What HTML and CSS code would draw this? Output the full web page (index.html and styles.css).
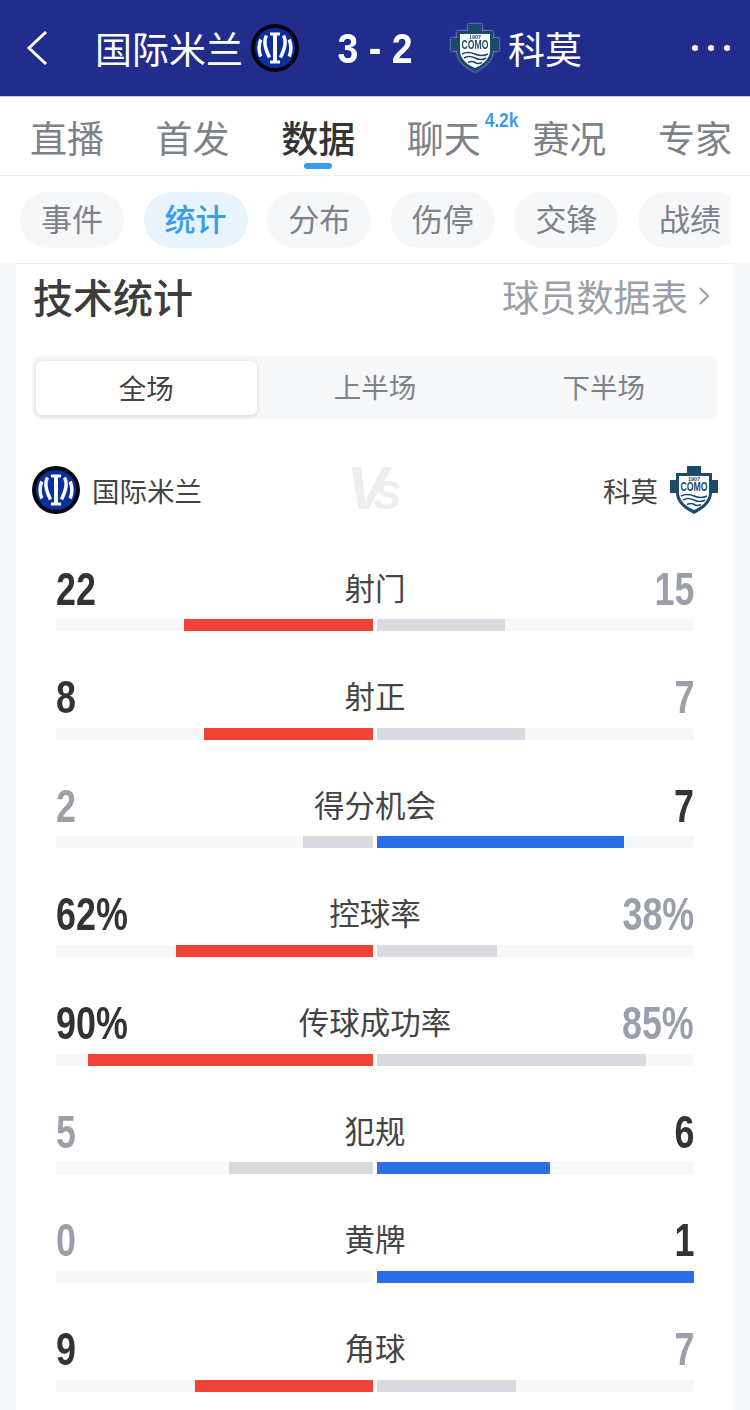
FILE: index.html
```html
<!DOCTYPE html>
<html lang="zh-CN">
<head>
    <meta charset="UTF-8">
    <meta name="viewport" content="width=device-width, initial-scale=1.0">
    <title>技术统计</title>
    <link rel="stylesheet" href="styles.css">
</head>
<body>

<svg class="defs" width="0" height="0" aria-hidden="true">
    <symbol id="inter" viewBox="0 0 48 48">
        <circle cx="24" cy="24" r="24" fill="#05060f"/>
        <circle cx="24" cy="24" r="20" fill="#0b2f9f"/>
        <g fill="none" stroke="#fff" stroke-width="3.400">
            <path d="M9.800 15.500q-3.500 8.500 0 17"/>
            <path d="M38.200 15.500q3.500 8.500 0 17"/>
            <path d="M15.500 11.500c-3 5-2 12 3 22"/>
            <path d="M32.500 11.500c3 5 2 12-3 22"/>
            <path d="M24 10v28" stroke-width="4"/>
        </g>
        <path d="M19 8.500h10v3h-10zM19 36.500h10v3h-10z" fill="#fff"/>
    </symbol>
    <symbol id="como-shield" viewBox="0 0 48 48">
        <path d="M17 0h14v7h11v7h6v13h-6c0 10-10 17-18 21-8-4-18-11-18-21H0V14h6V7h11z" fill="#1c4a6c"/>
        <path d="M9 10h30v17c0 8-8 14-15 17-7-3-15-9-15-17z" fill="#fff"/>
        <g fill="none" stroke="#1c4a6c" stroke-width="1.600">
            <path d="M11 30q6-3 13 0t13 0"/>
            <path d="M13 34q5-3 11 0t11 0"/>
            <path d="M17 38.500q4-2 7 0t7 0"/>
        </g>
    </symbol>
</svg>

<header class="match-bar">
    <svg class="back" viewBox="0 0 24 40" width="24" height="40"><path d="M21 4L4 20l17 16" fill="none" stroke="#fff" stroke-width="3"/></svg>
    <span class="team-name home">国际米兰</span>
    <svg class="crest-top inter-top"><use href="#inter"/></svg>
    <span class="score">3 - 2</span>
    <svg class="crest-top como-top" viewBox="0 0 48 48">
        <use href="#como-shield" width="48" height="48"/>
        <text class="como-year" x="24" y="14.500" text-anchor="middle" textLength="12" lengthAdjust="spacingAndGlyphs">1907</text>
        <text class="como-name" x="24" y="25" text-anchor="middle" textLength="27" lengthAdjust="spacingAndGlyphs">COMO</text>
    </svg>
    <span class="team-name">科莫</span>
    <span class="dots"><i></i><i></i><i></i></span>
</header>

<nav class="tabs">
    <a>直播</a>
    <a>首发</a>
    <a class="active">数据</a>
    <a class="has-badge">聊天<sup>4.2k</sup></a>
    <a>赛况</a>
    <a>专家</a>
</nav>

<div class="pills">
    <a>事件</a>
    <a class="active">统计</a>
    <a>分布</a>
    <a>伤停</a>
    <a>交锋</a>
    <a>战绩</a>
</div>

<main class="card">
    <div class="card-head">
        <h2>技术统计</h2>
        <a class="more">球员数据表<svg viewBox="0 0 12 20" width="12" height="20"><path d="M2 2l8 8-8 8" fill="none" stroke="#9a9fa9" stroke-width="2"/></svg></a>
    </div>

    <div class="periods">
        <a class="active">全场</a>
        <a>上半场</a>
        <a>下半场</a>
    </div>

    <div class="teams">
        <span class="team"><svg class="crest"><use href="#inter"/></svg>国际米兰</span>
        <span class="vs">V<small>S</small></span>
        <span class="team away">科莫<svg class="crest" viewBox="0 0 48 48">
            <use href="#como-shield" width="48" height="48"/>
            <text class="como-year" x="24" y="14.500" text-anchor="middle" textLength="12" lengthAdjust="spacingAndGlyphs">1907</text>
            <text class="como-name" x="24" y="25" text-anchor="middle" textLength="27" lengthAdjust="spacingAndGlyphs">COMO</text>
        </svg></span>
    </div>

    <section class="stat">
        <div class="stat-top"><b>22</b><span>射门</span><b class="dim">15</b></div>
        <div class="bars">
            <div class="track left"><i class="red" style="width:59.5%"></i></div>
            <div class="track"><i class="grey" style="width:40.5%"></i></div>
        </div>
    </section>
    <section class="stat">
        <div class="stat-top"><b>8</b><span>射正</span><b class="dim">7</b></div>
        <div class="bars">
            <div class="track left"><i class="red" style="width:53.3%"></i></div>
            <div class="track"><i class="grey" style="width:46.7%"></i></div>
        </div>
    </section>
    <section class="stat">
        <div class="stat-top"><b class="dim">2</b><span>得分机会</span><b>7</b></div>
        <div class="bars">
            <div class="track left"><i class="grey" style="width:22.2%"></i></div>
            <div class="track"><i class="blue" style="width:77.8%"></i></div>
        </div>
    </section>
    <section class="stat">
        <div class="stat-top"><b>62%</b><span>控球率</span><b class="dim">38%</b></div>
        <div class="bars">
            <div class="track left"><i class="red" style="width:62%"></i></div>
            <div class="track"><i class="grey" style="width:38%"></i></div>
        </div>
    </section>
    <section class="stat">
        <div class="stat-top"><b>90%</b><span>传球成功率</span><b class="dim">85%</b></div>
        <div class="bars">
            <div class="track left"><i class="red" style="width:90%"></i></div>
            <div class="track"><i class="grey" style="width:85%"></i></div>
        </div>
    </section>
    <section class="stat">
        <div class="stat-top"><b class="dim">5</b><span>犯规</span><b>6</b></div>
        <div class="bars">
            <div class="track left"><i class="grey" style="width:45.5%"></i></div>
            <div class="track"><i class="blue" style="width:54.5%"></i></div>
        </div>
    </section>
    <section class="stat">
        <div class="stat-top"><b class="dim">0</b><span>黄牌</span><b>1</b></div>
        <div class="bars">
            <div class="track left"><i class="grey" style="width:0"></i></div>
            <div class="track"><i class="blue" style="width:100%"></i></div>
        </div>
    </section>
    <section class="stat">
        <div class="stat-top"><b>9</b><span>角球</span><b class="dim">7</b></div>
        <div class="bars">
            <div class="track left"><i class="red" style="width:56.25%"></i></div>
            <div class="track"><i class="grey" style="width:43.75%"></i></div>
        </div>
    </section>
</main>

</body>
</html>
```

FILE: styles.css
```css
html, body {
    margin: 0;
    height: 1410px;
    overflow: hidden;
}
body {
    font-family: "Noto Sans CJK SC", "Noto Sans", sans-serif;
    background-color: #f7f8fa;
    color: #333;
}
a {
    display: block;
}
.defs {
    display: block;
    height: 0;
}
.como-year {
    font-family: "Liberation Sans", sans-serif;
    font-size: 5px;
    font-weight: bold;
    fill: #1c4a6c;
}
.como-name {
    font-family: "Liberation Sans", sans-serif;
    font-size: 12px;
    font-weight: bold;
    fill: #1c4a6c;
}

.match-bar {
    display: flex;
    align-items: center;
    height: 96px;
    background-color: #212d8d;
    color: #fff;
    border-bottom: 1px solid #c9cbdc;
}
.back {
    margin-left: 25px;
}
.team-name {
    font-size: 37px;
    line-height: 94px;
}
.team-name.home {
    margin-left: 46px;
}
.crest-top {
    width: 48px;
    height: 48px;
}
.inter-top {
    margin-left: 8px;
}
.score {
    width: 86px;
    margin-left: 33px;
    font-family: "Liberation Sans", sans-serif;
    font-size: 43px;
    font-weight: bold;
    text-align: center;
    white-space: pre;
    transform: scaleX(0.87);
}
.como-top {
    margin-left: 33px;
    margin-right: 9px;
    filter: drop-shadow(0 0 1px #cfd6e6);
}
.dots {
    display: flex;
    gap: 10px;
    margin-left: auto;
    margin-right: 20px;
}
.dots i {
    width: 6px;
    height: 6px;
    border-radius: 50%;
    background-color: #fff;
}

.tabs {
    display: flex;
    justify-content: space-between;
    height: 78px;
    padding: 0 18px 0 30px;
    background-color: #fff;
    border-bottom: 1px solid #eff0f2;
}
.tabs a {
    position: relative;
    width: 74px;
    font-size: 37px;
    line-height: 80px;
    color: #7d8289;
    white-space: nowrap;
}
.tabs a.active {
    color: #333;
    font-weight: 500;
}
.tabs a.active::after {
    content: "";
    position: absolute;
    left: 23px;
    bottom: 6px;
    width: 28px;
    height: 6px;
    border-radius: 3px;
    background-color: #3a9cec;
}
.tabs sup {
    position: absolute;
    left: 78px;
    top: 11px;
    font-family: "Liberation Sans", sans-serif;
    font-size: 20px;
    font-weight: bold;
    line-height: 24px;
    color: #3a9cec;
    transform: scaleX(0.86);
    transform-origin: left;
}

.pills {
    display: flex;
    gap: 19.600px;
    height: 56px;
    padding: 16px 0 15px 20px;
    width: 710px;
    overflow: hidden;
    background-color: #fff;
    border-right: 20px solid #fff;
}
.pills a {
    flex: 0 0 104px;
    height: 56px;
    border-radius: 28px;
    background-color: #f6f7f9;
    font-size: 31px;
    line-height: 52px;
    text-align: center;
    color: #7d8289;
}
.pills a.active {
    background-color: #e8f4fd;
    color: #3a9cec;
    font-weight: 500;
}

.card {
    margin: 0 16px;
    border-top: 1px solid #eff0f2;
    background-color: #fff;
}
.card-head {
    display: flex;
    justify-content: space-between;
    align-items: center;
    height: 64px;
    padding: 0 24px 0 17px;
}
h2 {
    margin: 0;
    font-size: 40px;
    font-weight: 500;
    color: #3c3c3c;
}
.more {
    display: flex;
    align-items: center;
    gap: 10px;
    font-size: 37.200px;
    color: #9a9fa9;
}

.periods {
    display: grid;
    grid-template-columns: repeat(3, 1fr);
    height: 63px;
    margin: 28px 16px 0;
    border-radius: 8px;
    background-color: #f6f7f9;
}
.periods a {
    font-size: 27.500px;
    line-height: 60px;
    text-align: center;
    color: #7d8289;
}
.periods a.active {
    margin: 5px 4px 4px;
    line-height: 52px;
    border-radius: 6px;
    background-color: #fff;
    color: #444;
    box-shadow: 0 1px 4px rgba(0, 0, 0, 0.14);
}

.teams {
    display: grid;
    grid-template-columns: 1fr auto 1fr;
    align-items: center;
    height: 48px;
    margin: 43px 16px 0;
}
.team {
    display: flex;
    align-items: center;
    gap: 12px;
    box-sizing: border-box;
    height: 48px;
    padding-bottom: 1px;
    font-size: 27.500px;
    color: #444;
}
.team.away {
    justify-content: flex-end;
}
.crest {
    align-self: flex-start;
    width: 48px;
    height: 48px;
}
.vs {
    margin-left: -3px;
    padding-top: 3px;
    font-family: "Liberation Sans", sans-serif;
    font-size: 62px;
    font-style: italic;
    font-weight: bold;
    line-height: 45px;
    color: #eeeeee;
    white-space: nowrap;
}
.vs small {
    margin-left: -14px;
    font-size: 40px;
}

.stat {
    height: 108.670px;
    padding: 0 40px;
}
.teams + .stat {
    margin-top: 35px;
}
.stat-top {
    display: flex;
    justify-content: space-between;
    align-items: center;
    box-sizing: border-box;
    height: 74px;
    padding-top: 13px;
}
.stat-top b {
    flex: 1;
    font-family: "Liberation Sans", sans-serif;
    font-size: 46px;
    color: #333;
    transform: scaleX(0.78);
    transform-origin: left;
}
.stat-top b.dim {
    color: #9a9fa9;
}
.stat-top b:last-child {
    text-align: right;
    transform-origin: right;
}
.stat-top span {
    margin-top: -4px;
    font-size: 30.500px;
    color: #444;
}
.bars {
    display: flex;
    gap: 4px;
}
.track {
    flex: 1;
    height: 12px;
    background-color: #f6f7f9;
}
.track.left {
    display: flex;
    justify-content: flex-end;
}
.track i {
    display: block;
    height: 100%;
}
.red {
    background-color: #f04236;
}
.grey {
    background-color: #d8dae0;
}
.blue {
    background-color: #2b6fe8;
}
```
